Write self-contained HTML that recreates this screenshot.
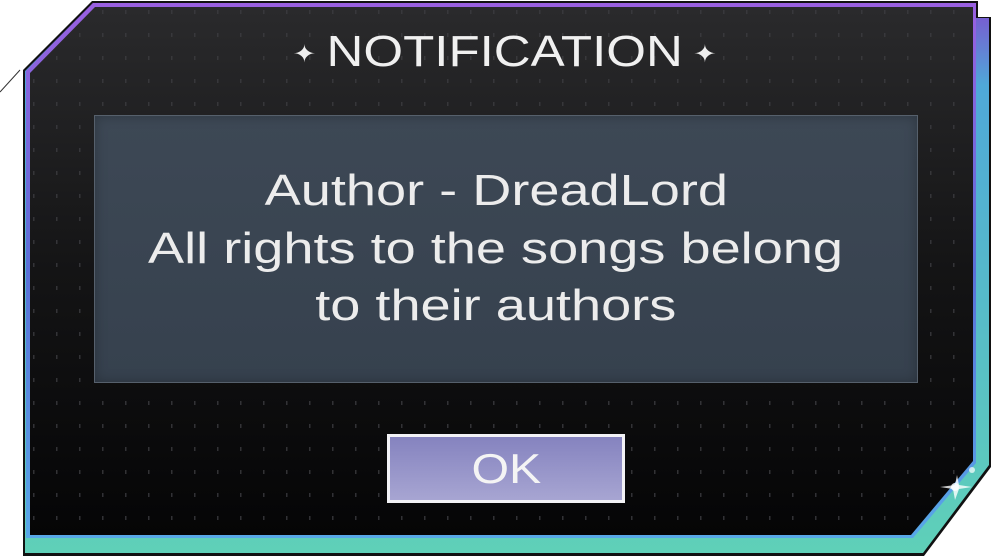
<!DOCTYPE html>
<html><head><meta charset="utf-8"><style>
html,body{margin:0;padding:0;background:#fff;width:992px;height:557px;overflow:hidden;position:relative;font-family:"Liberation Sans",sans-serif}
svg{position:absolute;left:0;top:0}
.t{position:absolute;left:0;width:992px;text-align:center;color:#ececec;white-space:nowrap}
.t span.s{display:inline-block;transform:scaleX(1.23)}
.st{font-size:24px;vertical-align:4px;margin:0 9px}
.box{position:absolute;left:94px;top:115px;width:822px;height:266px;background:linear-gradient(#3d4855,#36414e);border:1px solid #56606c;box-shadow:inset 0 0 12px rgba(0,0,0,.25)}
.ok{position:absolute;left:387px;top:434px;width:232px;height:63px;border:3px solid #f2f2f6;background:linear-gradient(#8583bf,#a7a5d2);color:#f4f4f4;font-size:42px;text-align:center;line-height:64px}
.ok span{display:inline-block;transform:scaleX(1.15)}
</style></head><body>
<svg width="992" height="557" viewBox="0 0 992 557">
<defs>
<linearGradient id="band" x1="0" y1="0" x2="0" y2="1">
<stop offset="0" stop-color="#7f4fd0"/><stop offset="0.15" stop-color="#4fa8d8"/><stop offset="1" stop-color="#5fd0b8"/></linearGradient>
<linearGradient id="edge" x1="0" y1="0" x2="0" y2="1">
<stop offset="0" stop-color="#9a60e0"/><stop offset="0.5" stop-color="#5a70d8"/><stop offset="1" stop-color="#58a8e8"/></linearGradient>
<linearGradient id="bg" x1="0" y1="0" x2="0" y2="1">
<stop offset="0" stop-color="#2a2a2c"/><stop offset="0.5" stop-color="#141415"/><stop offset="1" stop-color="#050506"/></linearGradient>
<pattern id="dots" width="23" height="23" patternUnits="userSpaceOnUse"><rect x="10" y="10" width="1.5" height="4" fill="#3c3c40"/></pattern>
</defs>
<line x1="0" y1="92" x2="20" y2="70" stroke="#333" stroke-width="1"/>
<polygon points="92,1 978,1 978,17 991,17 991,467 924,556 23,556 23,70" fill="#111"/>
<polygon points="93,3 976,3 976,18 989,18 989,465 923,553 25,553 25,71" fill="url(#band)"/>
<polygon points="93,3 976,3 976,463 913,538 26,538 26,71" fill="url(#edge)"/>
<polygon points="95,7 973,7 973,461 911,535 30,535 30,73" fill="url(#bg)"/>
<polygon points="95,7 973,7 973,461 911,535 30,535 30,73" fill="url(#dots)" opacity="0.8"/>
<g fill="#fff"><circle cx="955" cy="487" r="4" opacity=".8"/><circle cx="972" cy="470" r="3" opacity=".7"/>
<path d="M940 487 L955 485 L957 475 L959 485 L972 487 L959 489 L955 500 L953 489Z" opacity=".8"/></g>
</svg>
<div class="t" style="top:26px;font-size:44px;line-height:52px;color:#f0f0f0;left:9px"><span style="display:inline-block;transform:scaleX(1.16)"><span class="st">✦</span>NOTIFICATION<span class="st">✦</span></span></div>
<div class="box"></div>
<div class="t" style="top:162px;font-size:44px;line-height:57.5px"><span class="s">Author - DreadLord</span><br><span class="s">All rights to the songs belong</span><br><span class="s">to their authors</span></div>
<div class="ok"><span>OK</span></div>
</body></html>
